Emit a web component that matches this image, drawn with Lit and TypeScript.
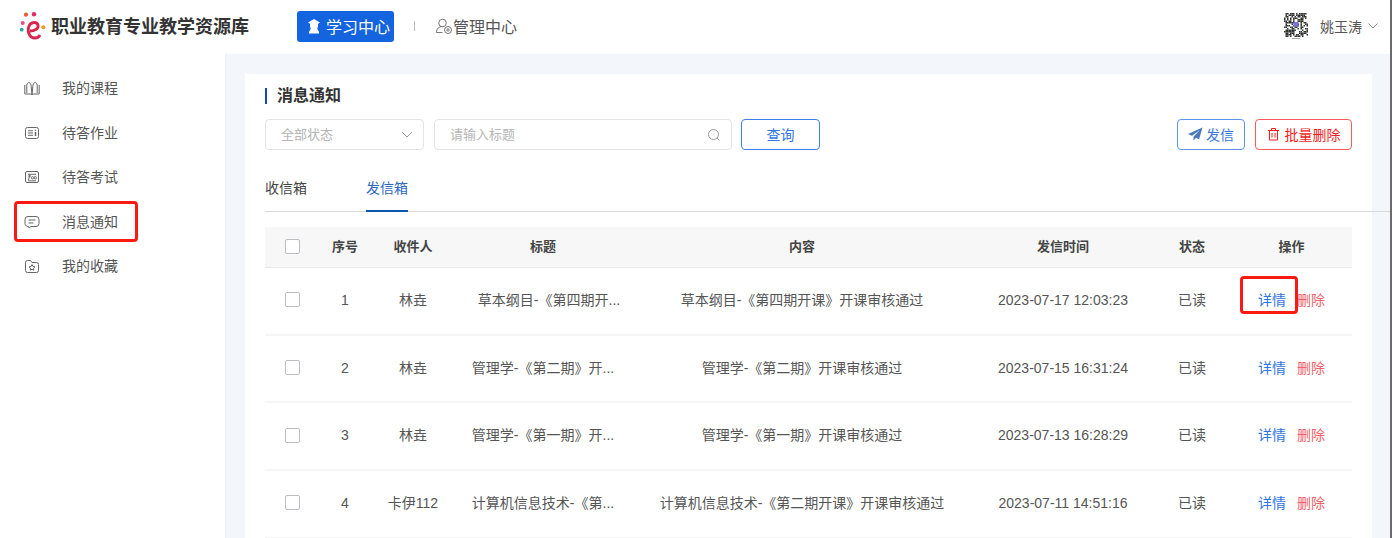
import { LitElement, html, css, svg } from "lit";
import { customElement } from "lit/decorators.js";

const rows = [
  ["1", "林垚", "草本纲目-《第四期开...", "草本纲目-《第四期开课》开课审核通过", "2023-07-17 12:03:23"],
  ["2", "林垚", "管理学-《第二期》开...", "管理学-《第二期》开课审核通过", "2023-07-15 16:31:24"],
  ["3", "林垚", "管理学-《第一期》开...", "管理学-《第一期》开课审核通过", "2023-07-13 16:28:29"],
  ["4", "卡伊112", "计算机信息技术-《第...", "计算机信息技术-《第二期开课》开课审核通过", "2023-07-11 14:51:16"],
];

const ico = (body: unknown) => html`<svg class="ni" viewBox="0 0 16 16" fill="none" stroke="#666" stroke-width="1">${body}</svg>`;
const nav = [
  ["我的课程", ico(svg`<path d="M.8 5v9h5.700l1.500.8 1.500-.8h5.700V5M2.800 13V5c.6-3.200 3.400-3.200 4.200 0l1 9M13.200 13V5c-.6-3.200-3.400-3.200-4.200 0l-1 9"/>`)],
  ["待答作业", ico(svg`<rect x="1.500" y="2.500" width="13" height="11" rx="2"/><path d="M4 5.800h5M4 8h5M4 10.300h5"/><path d="M11.500 7v4M11.500 4.800v1" stroke-width="1.500"/>`)],
  ["待答考试", ico(svg`<rect x="1.500" y="2.500" width="13" height="11" rx="1.500"/><path d="M4 5.300h8M5.800 6l-1.300 5M4 7h3M4 11.800h8"/><circle cx="8.500" cy="8.800" r="1.200"/><circle cx="11.300" cy="8.800" r="1.200"/>`)],
  ["消息通知", ico(svg`<path d="M4 2.500h8a3 3 0 0 1 3 3v4a3 3 0 0 1-3 3H7l-2 1.500-.5-1.500A3 3 0 0 1 1 9.500v-4a3 3 0 0 1 3-3z"/><path d="M4.500 6h7M4.500 9h5"/>`)],
  ["我的收藏", ico(svg`<path d="M1.500 4.500a2 2 0 0 1 2-2h3l1.500 2h4.500a2 2 0 0 1 2 2v6a2 2 0 0 1-2 2h-9a2 2 0 0 1-2-2z"/><path d="M8 6.500l1 2 2 .3-1.500 1.400.4 2L8 11.200l-1.900 1 .4-2L5 8.800l2-.3z"/>`)],
];

// Deterministic speckle standing in for the QR-code avatar.
const speck: { x: number; y: number }[] = [];
let seed = 1234567;
for (let y = 0; y < 16; y++) {
  for (let x = 0; x < 16; x++) {
    seed = (seed * 1103515245 + 12345) & 0x7fffffff;
    const corner = (x < 1 || x > 14) && (y < 1 || y > 14);
    if (!corner && (seed >> 16) % 100 < 62) speck.push({ x, y });
  }
}

@customElement("app-root")
export class AppRoot extends LitElement {
  static styles = css`
    :host { display: block; width: 1392px; height: 538px; overflow: hidden; background: #f3f6fb; position: relative;
      font-family: "Liberation Sans", "Noto Sans CJK SC", sans-serif; font-size: 14px; color: #555; }
    .top { height: 54px; background: #fff; display: flex; align-items: center; }
    .logo { width: 32px; height: 30px; margin-left: 18px; flex: none; }
    .brand { margin-left: 1px; padding-bottom: 4px; font-size: 18px; font-weight: 700; color: #333; width: 246px; white-space: nowrap; }
    .study { width: 97px; height: 31px; background: #1464e0; border-radius: 3px; color: #fff; font-size: 16px; box-sizing: border-box; padding: 0 0 2px 9px;
      display: flex; align-items: center; gap: 4px; margin-top: -1px; }
    .sep { width: 1px; height: 10px; background: #bbb; margin-left: 20px; margin-top: -2px; }
    .manage { margin-left: 20px; display: flex; align-items: center; gap: 0; font-size: 16px; color: #555; padding-bottom: 3px; }
    .user { margin-left: auto; display: flex; align-items: center; font-size: 14px; color: #555; padding-right: 14px; padding-bottom: 3px; }
    .qr { width: 26px; height: 28px; margin-right: 11px; flex: none; }
    .main { display: flex; height: 484px; }
    .side { width: 225px; background: #fff; flex: none; padding-top: 12px; border-right: 1px solid #eceff4; }
    .item { height: 44.500px; display: flex; align-items: center; padding-left: 24px; gap: 22px; color: #555; font-size: 14px; position: relative; }
    .item span { padding-bottom: 2px; }
    .ni { width: 16px; height: 16px; flex: none; }
    .mark { position: absolute; border: 3.500px solid #fb1a12; border-radius: 4px; box-sizing: border-box; pointer-events: none; }
    .mark.nav { left: 14px; top: 1px; width: 124px; height: 41px; }
    .card { margin: 20px 20px 0 19px; flex: 1; background: #fff; padding: 0 20px; position: relative; min-width: 0; }
    h1 { margin: 14px 0 0; font-size: 16px; font-weight: 700; color: #333; height: 16px; line-height: 16px; padding-left: 12px; position: relative; }
    h1::before { content: ""; position: absolute; left: 0; top: 0; width: 1.500px; height: 16px; background: #0f4fa8; }
    .filters { display: flex; align-items: center; margin-top: 15px; height: 31px; }
    .sel, .inp { height: 31px; border: 1px solid #e2e4e8; border-radius: 4px; box-sizing: border-box; display: flex; align-items: center;
      color: #b5b5b5; font-size: 13px; padding-left: 15px; padding-right: 10px; justify-content: space-between; }
    .sel span, .inp span { padding-bottom: 2px; }
    .sel { width: 159px; } .inp { width: 298px; margin-left: 10px; }
    .btn { height: 31px; border-radius: 4px; box-sizing: border-box; display: flex; align-items: center; justify-content: center; background: #fff;
      font-size: 14px; padding-bottom: 2px; }
    .q { width: 79px; border: 1px solid #3f80e8; color: #2f74e4; margin-left: 9px; }
    .send { width: 68px; border: 1px solid #5d93ea; color: #3b78dc; margin-left: auto; gap: 3px; }
    .del { width: 97px; border: 1px solid #fa5a5a; color: #f51c1c; margin-left: 10px; gap: 5px; }
    .tabs { display: flex; height: 46px; margin-top: 15px; width: 1127px; border-bottom: 1px solid #d9d9d9; gap: 59px; font-size: 14px; }
    .tab { padding-top: 12px; height: 34px; color: #444; }
    .tab.on { color: #2a68c4; border-bottom: 2px solid #0f56b3; height: 33px; }
    .tbl { margin-top: 15px; width: 1087px; }
    .r { display: grid; grid-template-columns: 54px 52px 84px 176px 342px 180px 78px 1fr; align-items: center; text-align: center;
      height: 67.700px; border-bottom: 2px solid #f5f5f5; box-sizing: border-box; font-size: 14px; color: #555; white-space: nowrap; position: relative; }
    .r > div { padding-bottom: 4px; }
    .r > .cbw { padding-bottom: 2px; }
    .r > .n { padding-bottom: 2px; }
    .r.h { height: 41px; background: #f7f7f7; border-bottom: 1px solid #e8e8e8; font-weight: 700; font-size: 13px; color: #444; }
    .r.h > div { padding-bottom: 3px; }
    .r.h > .cbw { padding-bottom: 1px; }
    .first { padding-left: 12px; }
    .cb { width: 15px; height: 15px; border: 1px solid #bcbcc4; border-radius: 2px; background: #fff; box-sizing: border-box; margin-left: 20px; }
    .ops { display: flex; gap: 11px; justify-content: center; }
    .ops a { color: #2f74e4; } .ops a + a { color: #f0606a; }
    .mark.op { left: 975px; top: 8px; width: 58px; height: 38px; }
    .edge { position: absolute; right: 0; top: 0; bottom: 0; width: 2px; background: #6b6b6b; }
  `;

  render() {
    return html`
      <div class="top">
        <svg class="logo" viewBox="0 0 32 30">
          <path d="M12 19c4 0 9-2 8-6-1-3.500-7-3.500-9 1-2 5 0 12 6 12 2.500 0 4-1 5-3" fill="none" stroke="#d8264f" stroke-width="2.800"/>
          <circle cx="8" cy="2.700" r="2.100" fill="#ec5a35"/><circle cx="16" cy="2.200" r="2.200" fill="#d92a6c"/>
          <circle cx="4.700" cy="11" r="2" fill="#ea4f7f"/><circle cx="3.700" cy="17.700" r="1.900" fill="#27a79a"/>
          <circle cx="25.300" cy="15.300" r="2" fill="#ef9a1e"/>
        </svg>
        <div class="brand">职业教育专业教学资源库</div>
        <div class="study">
          <svg width="16" height="18" viewBox="0 0 16 18" fill="#fff"><path d="M2 5.500 8 2l6 3.500-2 1.200V9a4 4 0 0 1-.8 2.400L13 15v1.500H3V15l1.800-3.600A4 4 0 0 1 4 9V6.700z"/></svg>
          学习中心
        </div>
        <div class="sep"></div>
        <div class="manage">
          <svg width="18" height="18" viewBox="0 0 18 18" fill="none" stroke="#777" stroke-width="1"><circle cx="7.500" cy="6" r="3.800"/><path d="M1.500 15.500c0-4 2.500-6 6-6M1.500 15.500h6"/><circle cx="13" cy="13" r="3.500"/><circle cx="13" cy="13" r="1.200"/></svg>
          管理中心
        </div>
        <div class="user">
          <svg class="qr" viewBox="0 0 26 28">
            ${speck.map((p) => svg`<rect x=${1 + p.x * 1.5} y=${1 + p.y * 1.5} width="1.500" height="1.500" fill="#333"/>`)}
            <rect x="10.500" y="10" width="5" height="5" fill="#7373d8"/>
            <rect x="9" y="26" width="8" height="1" fill="#aaa"/>
          </svg>
          姚玉涛
          <svg width="10" height="6" viewBox="0 0 10 6" fill="none" stroke="#888" style="margin-left:6px"><path d="M.5.500 5 5 9.500.500"/></svg>
        </div>
      </div>
      <div class="main">
        <div class="side">
          ${nav.map(([t, i], n) => html`<div class="item">${i}<span>${t}</span>${n === 3 ? html`<div class="mark nav"></div>` : ""}</div>`)}
        </div>
        <div class="card">
          <h1>消息通知</h1>
          <div class="filters">
            <div class="sel"><span>全部状态</span>
              <svg width="12" height="7" viewBox="0 0 12 7" fill="none" stroke="#999"><path d="M1 1l5 5 5-5"/></svg>
            </div>
            <div class="inp"><span>请输入标题</span>
              <svg width="14" height="14" viewBox="0 0 14 14" fill="none" stroke="#999"><circle cx="6.500" cy="6.500" r="5"/><path d="M10 10l2.500 2.500"/></svg>
            </div>
            <div class="btn q">查询</div>
            <div class="btn send">
              <svg width="15" height="14" viewBox="0 0 15 14" fill="#4a78b8"><path d="M14.500.500 0 7l4 1.800L12 3 5.500 9.800V13.500L8 10.800l3 1.700z"/></svg>
              发信
            </div>
            <div class="btn del">
              <svg width="13" height="14" viewBox="0 0 13 14" fill="none" stroke="#f51c1c"><path d="M1 3.500h11M4.500 3.500v-2h4v2M2.500 3.500v9.500h8V3.500M5 6v4.500M8 6v4.500"/></svg>
              批量删除
            </div>
          </div>
          <div class="tabs"><div class="tab">收信箱</div><div class="tab on">发信箱</div></div>
          <div class="tbl">
            <div class="r h">
              <div class="cbw"><div class="cb"></div></div><div>序号</div><div>收件人</div><div>标题</div><div>内容</div><div>发信时间</div><div>状态</div><div>操作</div>
            </div>
            ${rows.map((r, n) => html`<div class="r">
              <div class="cbw"><div class="cb"></div></div>
              <div class="n">${r[0]}</div><div>${r[1]}</div><div class=${n === 0 ? "first" : ""}>${r[2]}</div><div>${r[3]}</div><div class="n">${r[4]}</div><div>已读</div>
              <div class="ops"><a>详情</a><a>删除</a></div>
              ${n === 0 ? html`<div class="mark op"></div>` : ""}
            </div>`)}
          </div>
        </div>
      </div>
      <div class="edge"></div>
    `;
  }
}
